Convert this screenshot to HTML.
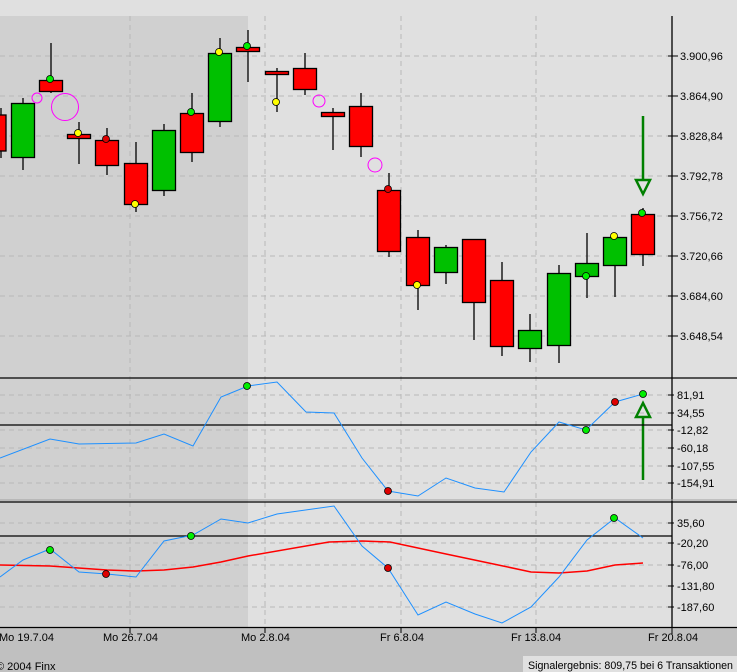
<!DOCTYPE html>
<html><head><meta charset="utf-8"><style>
html,body{margin:0;padding:0;width:737px;height:672px;overflow:hidden;background:#c0c0c0}
svg{display:block}
text{font-family:"Liberation Sans",sans-serif;font-size:11px;fill:#000}
</style></head><body>
<svg width="737" height="672" viewBox="0 0 737 672" xmlns="http://www.w3.org/2000/svg">
<rect x="0" y="0" width="737" height="628" fill="#e0e0e0"/>
<rect x="0" y="16" width="248" height="612" fill="#d0d0d0"/>
<g stroke="#b8b8b8" stroke-dasharray="5,4" stroke-width="1">
<line x1="0" y1="56" x2="672" y2="56"/><line x1="0" y1="96" x2="672" y2="96"/><line x1="0" y1="136" x2="672" y2="136"/><line x1="0" y1="176" x2="672" y2="176"/><line x1="0" y1="216" x2="672" y2="216"/><line x1="0" y1="256" x2="672" y2="256"/><line x1="0" y1="296" x2="672" y2="296"/><line x1="0" y1="336" x2="672" y2="336"/>
<line x1="0" y1="395" x2="672" y2="395"/><line x1="0" y1="413" x2="672" y2="413"/><line x1="0" y1="430" x2="672" y2="430"/><line x1="0" y1="448" x2="672" y2="448"/><line x1="0" y1="466" x2="672" y2="466"/><line x1="0" y1="483" x2="672" y2="483"/>
<line x1="0" y1="523" x2="672" y2="523"/><line x1="0" y1="543" x2="672" y2="543"/><line x1="0" y1="565" x2="672" y2="565"/><line x1="0" y1="586" x2="672" y2="586"/><line x1="0" y1="607" x2="672" y2="607"/>
<line x1="130" y1="16" x2="130" y2="628"/><line x1="265" y1="16" x2="265" y2="628"/><line x1="401" y1="16" x2="401" y2="628"/><line x1="536" y1="16" x2="536" y2="628"/>
</g>
<g stroke="#000" stroke-width="1.3">
<line x1="1" y1="108" x2="1" y2="158"/><rect x="-10" y="115" width="16" height="36" fill="#f00"/>
<line x1="23" y1="98" x2="23" y2="170"/><rect x="11.5" y="103.5" width="23" height="54" fill="#00c000"/>
<line x1="51" y1="43" x2="51" y2="93"/><rect x="39.5" y="80.5" width="23" height="11" fill="#f00"/>
<line x1="79" y1="122" x2="79" y2="164"/><rect x="67.5" y="134.5" width="23" height="4" fill="#f00"/>
<line x1="107" y1="128" x2="107" y2="175"/><rect x="95.5" y="140.5" width="23" height="25" fill="#f00"/>
<line x1="136" y1="142" x2="136" y2="212"/><rect x="124.5" y="163.5" width="23" height="41" fill="#f00"/>
<line x1="164" y1="124" x2="164" y2="196"/><rect x="152.5" y="130.5" width="23" height="60" fill="#00c000"/>
<line x1="192" y1="93" x2="192" y2="162"/><rect x="180.5" y="113.5" width="23" height="39" fill="#f00"/>
<line x1="220" y1="38" x2="220" y2="127"/><rect x="208.5" y="53.5" width="23" height="68" fill="#00c000"/>
<line x1="248" y1="30" x2="248" y2="82"/><rect x="236.5" y="47.5" width="23" height="4" fill="#f00"/>
<line x1="277" y1="68" x2="277" y2="112"/><rect x="265.5" y="71.5" width="23" height="3" fill="#f00"/>
<line x1="305" y1="53" x2="305" y2="95"/><rect x="293.5" y="68.5" width="23" height="21" fill="#f00"/>
<line x1="333" y1="108" x2="333" y2="150"/><rect x="321.5" y="112.5" width="23" height="4" fill="#f00"/>
<line x1="361" y1="93" x2="361" y2="157"/><rect x="349.5" y="106.5" width="23" height="40" fill="#f00"/>
<line x1="389" y1="173" x2="389" y2="257"/><rect x="377.5" y="190.5" width="23" height="61" fill="#f00"/>
<line x1="418" y1="230" x2="418" y2="310"/><rect x="406.5" y="237.5" width="23" height="48" fill="#f00"/>
<line x1="446" y1="245" x2="446" y2="284"/><rect x="434.5" y="247.5" width="23" height="25" fill="#00c000"/>
<line x1="474" y1="239" x2="474" y2="340"/><rect x="462.5" y="239.5" width="23" height="63" fill="#f00"/>
<line x1="502" y1="262" x2="502" y2="356"/><rect x="490.5" y="280.5" width="23" height="66" fill="#f00"/>
<line x1="530" y1="314" x2="530" y2="362"/><rect x="518.5" y="330.5" width="23" height="18" fill="#00c000"/>
<line x1="559" y1="265" x2="559" y2="363"/><rect x="547.5" y="273.5" width="23" height="72" fill="#00c000"/>
<line x1="587" y1="233" x2="587" y2="298"/><rect x="575.5" y="263.5" width="23" height="13" fill="#00c000"/>
<line x1="615" y1="237" x2="615" y2="297"/><rect x="603.5" y="237.5" width="23" height="28" fill="#00c000"/>
<line x1="643" y1="208" x2="643" y2="266"/><rect x="631.5" y="214.5" width="23" height="40" fill="#f00"/>
</g>
<g fill="none" stroke="#f0f" stroke-width="1"><circle cx="37" cy="98" r="5"/><circle cx="65" cy="107" r="13.5"/><circle cx="319" cy="101" r="6"/><circle cx="375" cy="165" r="7"/></g>
<g stroke="#000" stroke-width="0.8">
<circle cx="50" cy="79" r="3.5" fill="#0e0"/><circle cx="78" cy="133" r="3.5" fill="#ff0"/><circle cx="106" cy="139" r="3.5" fill="#d00"/><circle cx="135" cy="204" r="3.5" fill="#ff0"/><circle cx="191" cy="112" r="3.5" fill="#0e0"/><circle cx="219" cy="52" r="3.5" fill="#ff0"/><circle cx="247" cy="46" r="3.5" fill="#0e0"/><circle cx="276" cy="102" r="3.5" fill="#ff0"/><circle cx="388" cy="189" r="3.5" fill="#d00"/><circle cx="417" cy="285" r="3.5" fill="#ff0"/><circle cx="586" cy="276" r="3.5" fill="#0e0"/><circle cx="614" cy="236" r="3.5" fill="#ff0"/><circle cx="642" cy="213" r="3.5" fill="#0e0"/>
</g>
<g stroke="#008000" stroke-width="2.5" fill="none"><line x1="643" y1="116" x2="643" y2="180"/><polygon points="636,180 650,180 643,194"/>
<line x1="643" y1="480" x2="643" y2="417"/><polygon points="636,417 650,417 643,403"/></g>
<g stroke="#000" stroke-width="1.3">
<line x1="0" y1="378" x2="737" y2="378"/><line x1="0" y1="425" x2="672" y2="425"/><line x1="0" y1="502" x2="737" y2="502"/><line x1="0" y1="536" x2="672" y2="536"/><line x1="0" y1="627.5" x2="737" y2="627.5"/>
<line x1="672" y1="16" x2="672" y2="628"/>
</g>
<line x1="0" y1="500" x2="737" y2="500" stroke="#a0a0a0"/>
<g stroke="#000"><line x1="130" y1="628" x2="130" y2="633"/><line x1="265" y1="628" x2="265" y2="633"/><line x1="401" y1="628" x2="401" y2="633"/><line x1="536" y1="628" x2="536" y2="633"/><line x1="672" y1="628" x2="672" y2="634"/>
<line x1="668" y1="56" x2="678" y2="56"/><line x1="668" y1="96" x2="678" y2="96"/><line x1="668" y1="136" x2="678" y2="136"/><line x1="668" y1="176" x2="678" y2="176"/><line x1="668" y1="216" x2="678" y2="216"/><line x1="668" y1="256" x2="678" y2="256"/><line x1="668" y1="296" x2="678" y2="296"/><line x1="668" y1="336" x2="678" y2="336"/>
<line x1="668" y1="395" x2="674" y2="395"/><line x1="668" y1="413" x2="674" y2="413"/><line x1="668" y1="430" x2="674" y2="430"/><line x1="668" y1="448" x2="674" y2="448"/><line x1="668" y1="466" x2="674" y2="466"/><line x1="668" y1="483" x2="674" y2="483"/>
<line x1="668" y1="523" x2="674" y2="523"/><line x1="668" y1="543" x2="674" y2="543"/><line x1="668" y1="565" x2="674" y2="565"/><line x1="668" y1="586" x2="674" y2="586"/><line x1="668" y1="607" x2="674" y2="607"/></g>
<polyline fill="none" stroke="#1e90ff" stroke-width="1" points="0,458 50,439 79,444 136,443 164,434 193,446 221,397 248,386 277,382 306,412 334,413 362,458 388,491 418,496 446,478 475,488 504,492 531,452 559,422 586,430 615,402 643,394"/>
<polyline fill="none" stroke="#f00" stroke-width="1.5" points="0,565 50,566 107,570 136,571 164,570 193,567 221,562 248,556 329,542 362,541 390,542 446,554 503,566 531,572 559,573 587,571 615,565 643,563"/>
<polyline fill="none" stroke="#1e90ff" stroke-width="1" points="0,577 23,560 50,549 79,572 107,574 136,577 164,541 193,535 221,519 248,523 277,514 334,506 362,546 388,568 418,615 446,602 475,614 502,623 531,607 559,577 587,540 615,518 643,538"/>
<g stroke="#000" stroke-width="0.8">
<circle cx="247" cy="386" r="3.5" fill="#0e0"/><circle cx="388" cy="491" r="3.5" fill="#d00"/><circle cx="586" cy="430" r="3.5" fill="#0e0"/><circle cx="615" cy="402" r="3.5" fill="#d00"/><circle cx="643" cy="394" r="3.5" fill="#0e0"/>
<circle cx="50" cy="550" r="3.5" fill="#0e0"/><circle cx="106" cy="574" r="3.5" fill="#d00"/><circle cx="191" cy="536" r="3.5" fill="#0e0"/><circle cx="388" cy="568" r="3.5" fill="#d00"/><circle cx="614" cy="518" r="3.5" fill="#0e0"/>
</g>
<g>
<text x="680" y="60">3.900,96</text><text x="680" y="100">3.864,90</text><text x="680" y="140">3.828,84</text><text x="680" y="180">3.792,78</text><text x="680" y="220">3.756,72</text><text x="680" y="260">3.720,66</text><text x="680" y="300">3.684,60</text><text x="680" y="340">3.648,54</text>
<text x="677" y="399">81,91</text><text x="677" y="417">34,55</text><text x="677" y="434">-12,82</text><text x="677" y="452">-60,18</text><text x="677" y="470">-107,55</text><text x="677" y="487">-154,91</text>
<text x="677" y="527">35,60</text><text x="677" y="547">-20,20</text><text x="677" y="569">-76,00</text><text x="677" y="590">-131,80</text><text x="677" y="611">-187,60</text>
<text x="-1" y="641">Mo 19.7.04</text><text x="103" y="641">Mo 26.7.04</text><text x="241" y="641">Mo 2.8.04</text><text x="380" y="641">Fr 6.8.04</text><text x="511" y="641">Fr 13.8.04</text><text x="648" y="641">Fr 20.8.04</text>
<text x="-4" y="670">© 2004 Finx</text>
</g>
<rect x="523" y="656" width="214" height="16" fill="#e0e0e0"/>
<text x="528" y="669" textLength="205" lengthAdjust="spacingAndGlyphs">Signalergebnis: 809,75 bei 6 Transaktionen</text>
</svg>
</body></html>
